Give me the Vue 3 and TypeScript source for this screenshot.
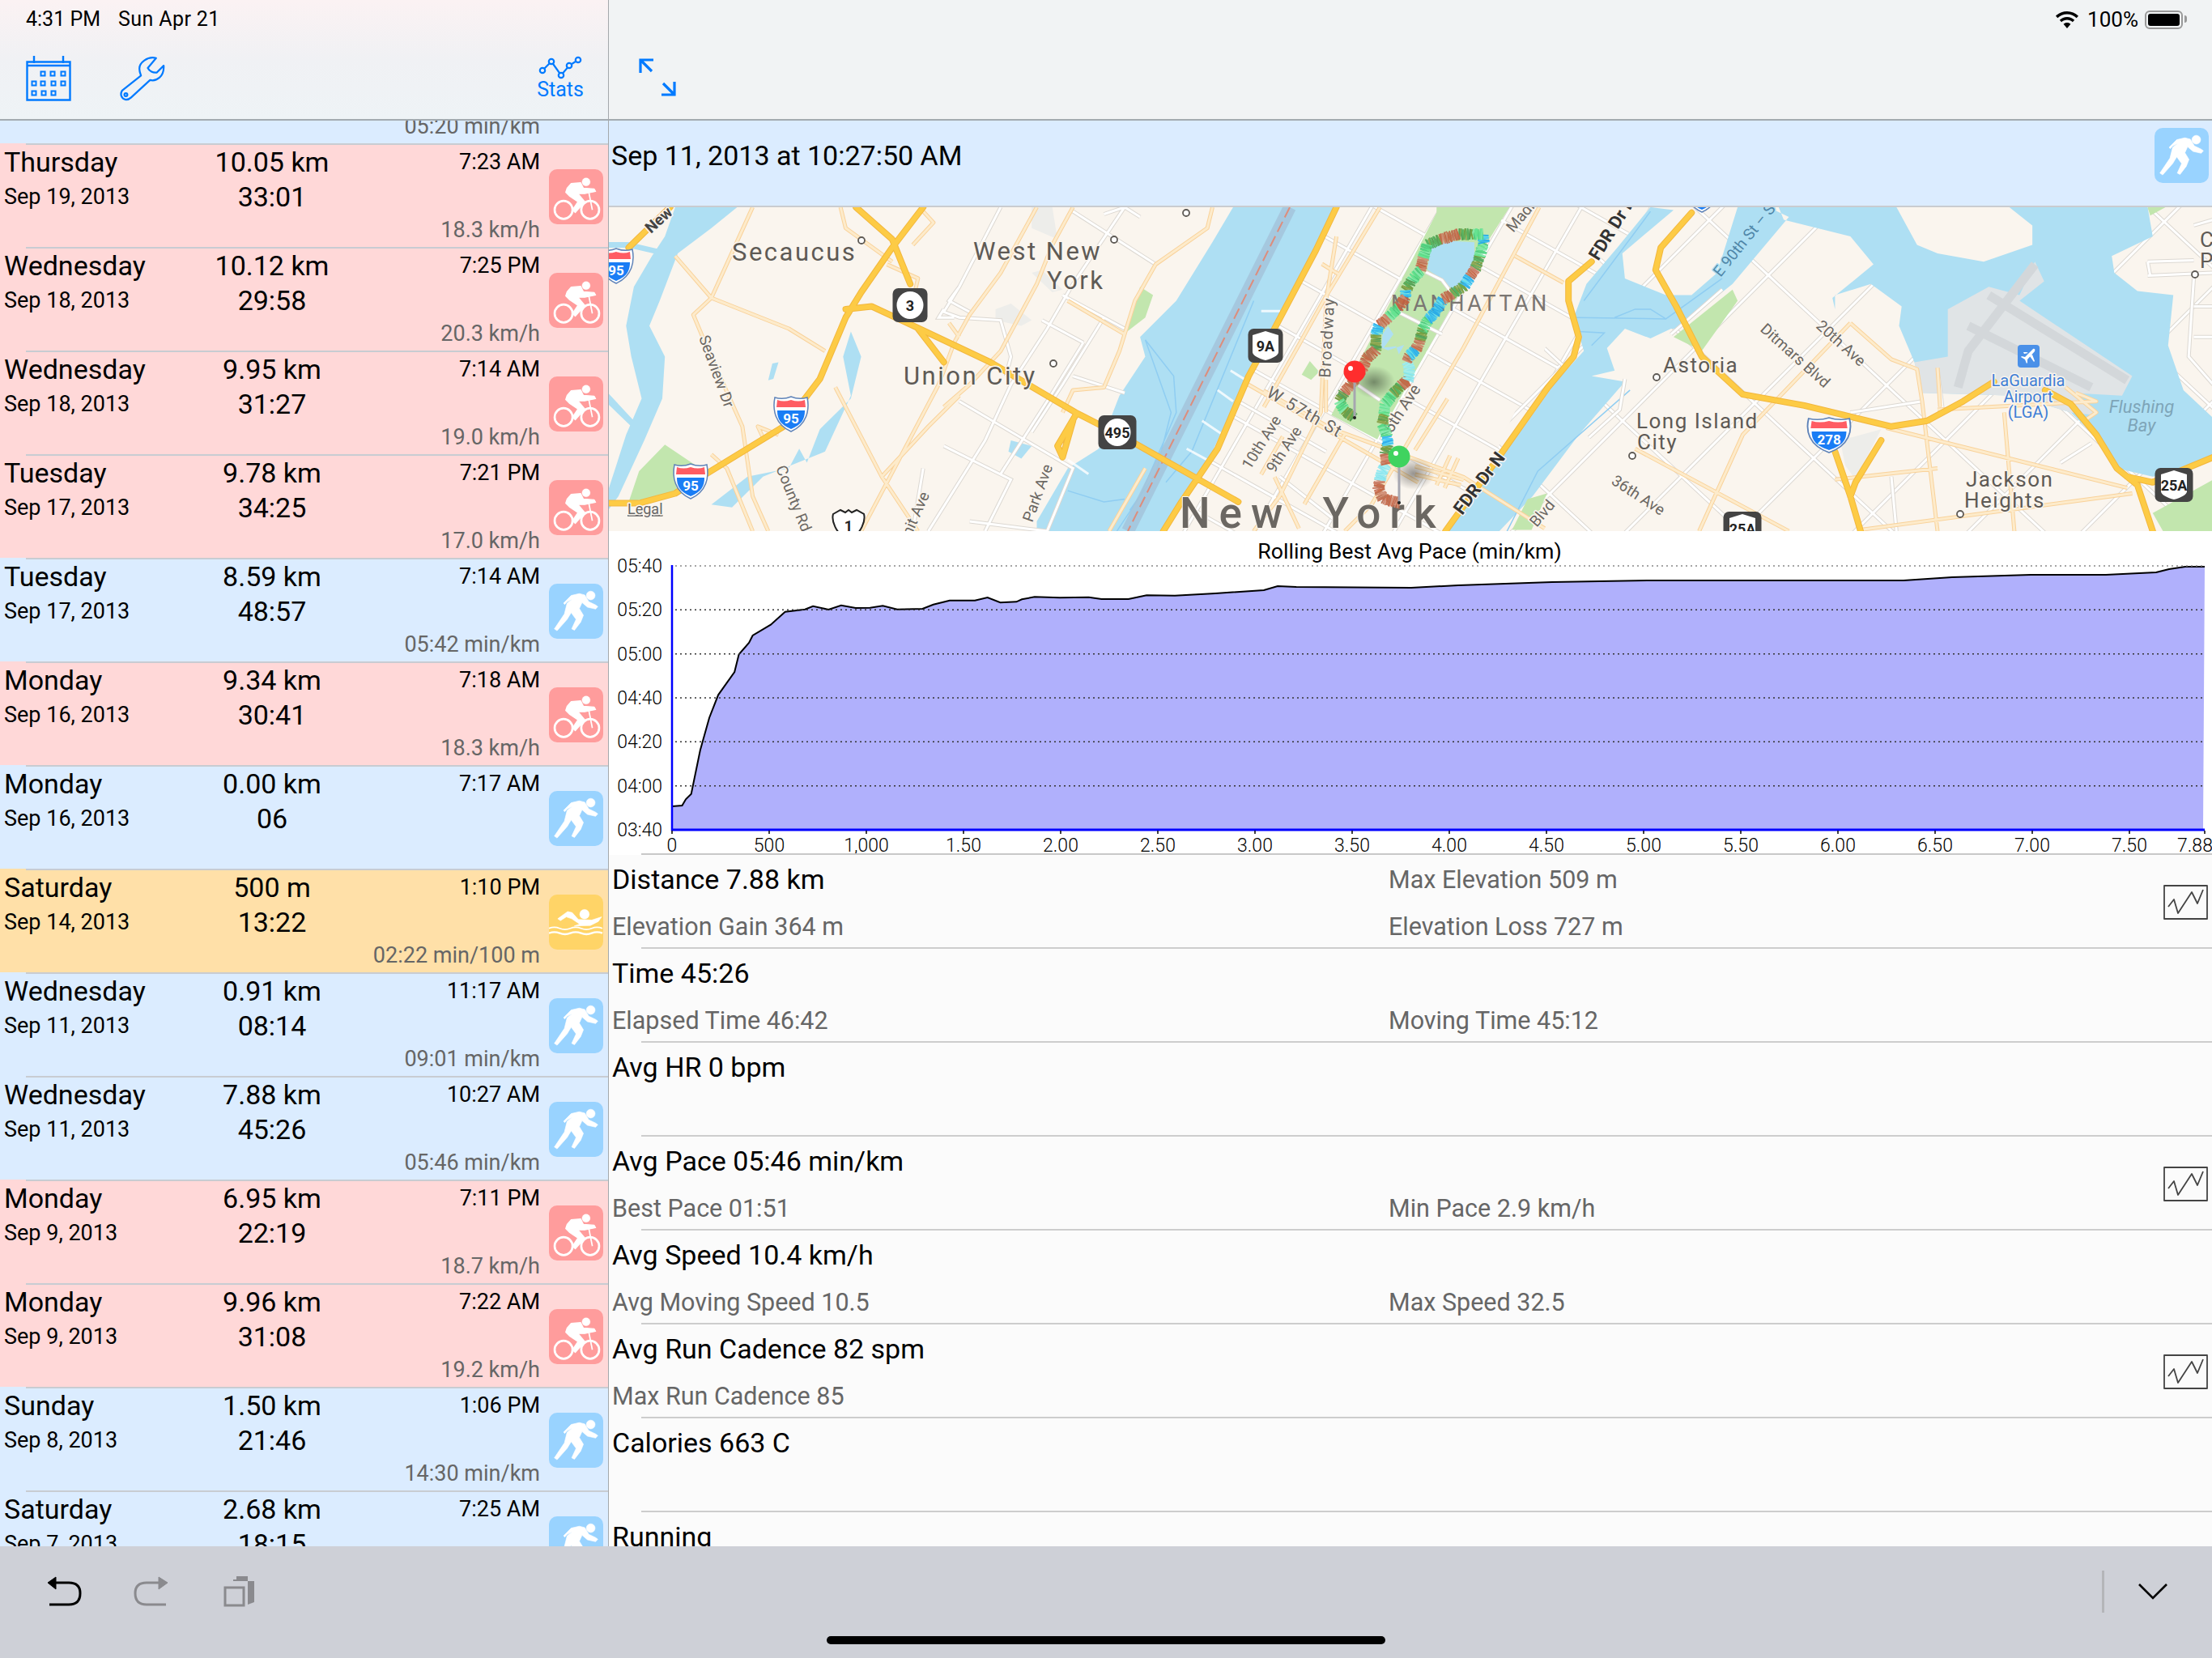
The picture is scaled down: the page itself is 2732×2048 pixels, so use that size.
<script setup lang="ts">
type Kind = 'bike' | 'run' | 'swim'

interface Workout {
  day: string
  date: string
  dist: string
  time: string
  start: string
  pace: string
  kind: Kind
}

const workouts: Workout[] = [
  { day: '', date: '', dist: '', time: '', start: '', pace: '05:20 min/km', kind: 'run' },
  { day: 'Thursday', date: 'Sep 19, 2013', dist: '10.05 km', time: '33:01', start: '7:23 AM', pace: '18.3 km/h', kind: 'bike' },
  { day: 'Wednesday', date: 'Sep 18, 2013', dist: '10.12 km', time: '29:58', start: '7:25 PM', pace: '20.3 km/h', kind: 'bike' },
  { day: 'Wednesday', date: 'Sep 18, 2013', dist: '9.95 km', time: '31:27', start: '7:14 AM', pace: '19.0 km/h', kind: 'bike' },
  { day: 'Tuesday', date: 'Sep 17, 2013', dist: '9.78 km', time: '34:25', start: '7:21 PM', pace: '17.0 km/h', kind: 'bike' },
  { day: 'Tuesday', date: 'Sep 17, 2013', dist: '8.59 km', time: '48:57', start: '7:14 AM', pace: '05:42 min/km', kind: 'run' },
  { day: 'Monday', date: 'Sep 16, 2013', dist: '9.34 km', time: '30:41', start: '7:18 AM', pace: '18.3 km/h', kind: 'bike' },
  { day: 'Monday', date: 'Sep 16, 2013', dist: '0.00 km', time: '06', start: '7:17 AM', pace: '', kind: 'run' },
  { day: 'Saturday', date: 'Sep 14, 2013', dist: '500 m', time: '13:22', start: '1:10 PM', pace: '02:22 min/100 m', kind: 'swim' },
  { day: 'Wednesday', date: 'Sep 11, 2013', dist: '0.91 km', time: '08:14', start: '11:17 AM', pace: '09:01 min/km', kind: 'run' },
  { day: 'Wednesday', date: 'Sep 11, 2013', dist: '7.88 km', time: '45:26', start: '10:27 AM', pace: '05:46 min/km', kind: 'run' },
  { day: 'Monday', date: 'Sep 9, 2013', dist: '6.95 km', time: '22:19', start: '7:11 PM', pace: '18.7 km/h', kind: 'bike' },
  { day: 'Monday', date: 'Sep 9, 2013', dist: '9.96 km', time: '31:08', start: '7:22 AM', pace: '19.2 km/h', kind: 'bike' },
  { day: 'Sunday', date: 'Sep 8, 2013', dist: '1.50 km', time: '21:46', start: '1:06 PM', pace: '14:30 min/km', kind: 'run' },
  { day: 'Saturday', date: 'Sep 7, 2013', dist: '2.68 km', time: '18:15', start: '7:25 AM', pace: '', kind: 'run' }
]

const details = [
  { main: 'Distance 7.88 km', top: 'Max Elevation 509 m', left: 'Elevation Gain 364 m', right: 'Elevation Loss 727 m', chart: true },
  { main: 'Time 45:26', top: '', left: 'Elapsed Time 46:42', right: 'Moving Time 45:12', chart: false },
  { main: 'Avg HR 0 bpm', top: '', left: '', right: '', chart: false },
  { main: 'Avg Pace 05:46 min/km', top: '', left: 'Best Pace 01:51', right: 'Min Pace 2.9 km/h', chart: true },
  { main: 'Avg Speed 10.4 km/h', top: '', left: 'Avg Moving Speed 10.5', right: 'Max Speed 32.5', chart: false },
  { main: 'Avg Run Cadence 82 spm', top: '', left: 'Max Run Cadence 85', right: '', chart: true },
  { main: 'Calories 663 C', top: '', left: '', right: '', chart: false },
  { main: 'Running', top: '', left: '', right: '', chart: false }
]

// map is traced from crops, each crop has its own scale
function conv(s: string, ox: number, oy: number, sx: number, sy: number, close = false) {
  const pts = s.trim().split(/\s+/).map(p => {
    const [x, y] = p.split(',').map(Number)
    return `${(ox + x * sx).toFixed(1)} ${(oy + y * sy).toFixed(1)}`
  })
  return 'M' + pts.join('L') + (close ? 'Z' : '')
}
const L = (s: string, c = false) => conv(s, 750, 130, 0.638, 0.345, c)
const R = (s: string, c = false) => conv(s, 1740, 130, 0.633, 0.345, c)
const M = (s: string, c = false) => conv(s, 1560, 256, 1 / 3, 1 / 3, c)

function grid(ax: number, ay: number, dx: number, dy: number, sx: number, sy: number, from: number, to: number) {
  const out: string[] = []
  for (let i = from; i <= to; i++) {
    const x = ax + i * sx
    const y = ay + i * sy
    out.push(`M${x - dx * 900} ${y - dy * 900}L${x + dx * 900} ${y + dy * 900}`)
  }
  return out.join('')
}

const manhattanGrid =
  grid(1700, 543, 0.5, -0.866, 65, 37, -6, 7) + grid(1700, 543, 0.87, 0.49, 31, -54, -3, 7)
const queensGrid =
  grid(2183, 340, 0.7, -0.7, 73, 68, -4, 7) + grid(2183, 340, 0.73, 0.68, 90, -90, -3, 5)

const water = [
  R('470,365 405,510 345,640 320,760 340,880 285,990 235,1120 170,1280 75,1525 175,1525 240,1400 330,1180 420,990 355,970 400,950 385,870 420,800 470,835 510,800 520,800 630,640 740,400 700,365 640,365 600,600 550,680 500,680 420,620 415,530 515,375', true),
  R('720,365 1440,365 1450,470 1370,540 1375,600 1420,665 1490,680 1480,860 1510,1020 1568,1120 1568,1260 1520,1310 1450,1330 1380,1300 1340,1190 1290,1100 1180,1040 1000,1030 985,920 955,790 960,720 900,640 830,680 830,730 825,690 905,570 860,470 730,410', true),
  L('1210,365 1170,490 1100,700 1030,830 1040,900 990,1040 950,1230 890,1300 830,1490 830,1525 1080,1525 1110,1400 1170,1240 1240,960 1300,780 1370,500 1410,365', true),
  L('130,365 250,365 200,440 135,530 100,700 80,790 110,900 105,1050 70,1200 20,1400 0,1450 0,1380 35,1180 65,1050 45,900 35,790 50,650 85,540 110,470', true),
  L('0,490 40,490 110,520 110,540 40,510 0,510', true),
  L('0,1030 50,1130 45,1150 0,1070', true),
  L('470,810 490,900 470,1050 410,1160 385,1280 370,1230 350,1300 270,1330 200,1430 240,1440 300,1330 420,1240 470,1040 455,900', true),
  L('330,920 320,980 310,985 318,925', true),
  L('780,1200 820,1220 800,1265 775,1240', true)
]
const lakes = [
  M('620,140 700,125 780,130 780,190 745,270 700,305 650,260 605,230', true),
  M('460,440 480,470 445,520 490,515 500,545 520,510 460,530 435,520 440,470', true)
]
const land = [
  R('950,365 1170,365 1215,430 1215,500 1120,560 1030,530 990,500', true)
]
const parks = [
  M('640,0 910,0 840,110 420,860 250,770 640,20', true),
  R('630,660 640,700 570,880 515,830', true),
  L('1030,650 1055,680 1040,760 1005,810', true),
  L('110,1215 170,1290 130,1390 40,1420 60,1310', true),
  M('140,620 170,570 205,610 175,640', true),
  R('1440,365 1475,365 1445,395', true),
  R('1568,1340 1450,1460 1470,1525 1568,1525', true),
  R('230,1410 268,1390 238,1520 200,1520', true)
]
const airport = [
  R('1050,730 1130,650 1190,680 1220,560 1238,630 1190,700 1410,970 1390,1040 1290,1030 1340,1110 1290,1100 1180,1040 1000,1030 985,920 1050,900', true)
]
const runways = [
  R('1130,680 1400,985'),
  R('1220,570 1090,880 1070,1010'),
  R('1090,790 1330,1010')
]
const gray = [
  L('820,365 860,365 870,480 820,440', true),
  L('750,730 780,710 820,770 800,790 750,770', true),
  L('820,600 840,590 880,660 860,670', true),
  R('840,1200 920,1160 870,1340 850,1290', true)
]
const ferries = [
  R('325,760 500,765 610,620'),
  R('330,810 380,815 355,860'),
  R('400,760 440,730 470,730 500,765'),
  L('1040,840 1095,970 1100,1100 1030,1400 985,1525'),
  L('1040,840 1090,1100 1060,1320 1010,1450'),
  L('1250,700 1130,1240 1080,1350'),
  R('470,380 340,700'),
  R('430,1020 250,1310 190,1525'),
  L('890,1380 960,1420 1000,1410')
]
const piers = [
  L('1180,1020 1210,1060'), L('1150,1130 1190,1180'), L('1120,1230 1160,1270'), L('1205,950 1240,990'),
  L('890,1270 930,1320'), M('-10,385 60,385')
]
const whiteRoads = [
  L('760,365 680,650 650,740 680,760 760,770 780,900 770,970'),
  L('1000,365 900,640 850,800 780,1000 730,1200 620,1525'),
  L('900,380 1060,570'), L('880,680 1000,800'), L('840,770 920,850'), L('900,970 1000,1030'),
  L('680,1060 900,1300 850,1525'), L('650,1220 780,1340 730,1525'), L('960,390 1000,365 1030,400'),
  L('920,850 850,1060 760,1320'), L('960,760 880,1000 820,1170'), L('680,650 660,700 700,740'),
  L('610,1300 590,1525'), L('700,1490 850,1525'), L('650,730 640,760 670,760'),
  L('1220,1060 1390,1240'), L('1300,1330 1410,1490'),
  R('1530,620 1520,900 1568,1000'), R('1440,560 1530,555'), R('1440,610 1568,600'), R('1440,560 1445,610'),
  R('1530,430 1568,410'), R('1530,720 1568,720'), R('1530,830 1568,830'),
  R('860,1100 1000,1060'), R('940,1330 950,1525'), R('1030,940 1040,1090'),
  R('350,1190 410,1090 420,980'), R('510,820 610,660'), R('1270,1280 1330,1210'),
  M('600,240 660,270 690,310'), M('500,390 660,470'), M('350,660 430,715')
]
const paleRoads = [
  L('280,365 200,690 350,800 420,880'), L('200,690 165,750 190,860 260,1150 280,1400 310,1525'),
  L('450,365 460,440 550,560'), L('610,380 630,420 590,500'),
  L('830,365 760,600 700,750 670,850 640,1000 560,1280 490,1525'), L('900,365 860,500 830,640 760,880 700,1000 650,1080'),
  L('1170,365 1160,440 1060,570 1020,700 990,880 960,1010 900,1020 880,1100'),
  L('440,1010 530,1330 600,1525'), L('680,1040 620,1150 530,1330'), L('200,1250 230,1300 280,1525'),
  L('890,700 1000,820'), L('540,570 600,620 590,700'), L('130,540 200,690'), L('330,1180 290,1150 300,1190'),
  L('970,1525 1040,1300'), L('660,780 680,830'),
  L('1410,470 1390,700 1380,1100 1300,1400 1250,1525'), L('1230,990 1568,1350'),
  M('430,0 230,330 130,510 0,740'), M('1020,0 740,520 400,1100 300,1200'),
  M('215,210 280,250'), M('0,680 250,820 740,1000 1040,1190'), M('300,840 150,1100'), M('560,900 680,710'),
  M('230,640 230,760'), M('40,1000 130,1190'), M('70,850 -10,990'),
  M('930,180 1110,280'), M('560,960 740,1010'), M('560,990 730,1030'), M('690,920 640,1030'), M('720,930 670,1040'),
  R('860,780 940,910 990,945 1000,1060 1030,1525'), R('860,780 650,1180 565,1525'),
  R('930,1155 1400,1370'), R('880,1520 1410,1390'), R('830,1340 1030,1300'), R('1160,1100 1180,1525'),
  R('440,1230 740,1525'), R('1030,1090 1340,1060 1300,1030'), R('1280,1010 1340,1100 1320,1125'), R('1030,940 1035,1080')
]
const highways = [
  L('480,365 550,480 585,640'),
  L('610,365 550,510 490,670 460,760 410,980 340,1150 190,1320 130,1390 60,1425 0,1425'),
  L('120,365 40,510'),
  L('460,730 510,720 580,780 740,920 905,1100 1000,1190 1220,1420'),
  L('600,800 650,920'), L('905,1110 870,1220 880,1260 900,1130'),
  L('1410,365 1370,520 1290,800 1240,970 1180,1230 1110,1420 1075,1525'),
  R('550,385 490,510 480,590 520,720 570,900 650,1035 770,1075 940,1150 1010,1130 1080,1060 1140,990'),
  R('1240,1020 1290,1070 1340,1180 1380,1300 1420,1360 1450,1525'),
  R('1400,1330 1450,1350 1568,1260'),
  R('830,1240 860,1400 880,1525'), R('920,1200 870,1350 860,1400'),
  R('355,560 310,630 310,700 330,830 320,900 270,1010 170,1270 70,1525')
]

const labels = [
  { t: 'Secaucus', x: 903, y: 322, s: 31, r: 0, c: 'city big' },
  { t: 'West New', x: 1201, y: 321, s: 31, r: 0, c: 'city big' },
  { t: 'York', x: 1292, y: 357, s: 31, r: 0, c: 'city big' },
  { t: 'Union City', x: 1115, y: 475, s: 31, r: 0, c: 'city big' },
  { t: 'Seaview Dr', x: 862, y: 417, s: 19, r: 70, c: 'road' },
  { t: 'County Rd', x: 957, y: 578, s: 19, r: 68, c: 'road' },
  { t: 'Park Ave', x: 1274, y: 646, s: 19, r: -70, c: 'road' },
  { t: 'Summit Ave', x: 1106, y: 704, s: 19, r: -66, c: 'road' },
  { t: 'New', x: 803, y: 289, s: 19, r: -42, c: 'road strong' },
  { t: 'Broadway', x: 1642, y: 467, s: 20, r: -87, c: 'road wide' },
  { t: 'W 57th St', x: 1562, y: 489, s: 21, r: 30, c: 'road wide' },
  { t: '10th Ave', x: 1543, y: 581, s: 19, r: -58, c: 'road' },
  { t: '9th Ave', x: 1573, y: 585, s: 19, r: -57, c: 'road' },
  { t: '5th Ave', x: 1718, y: 536, s: 20, r: -57, c: 'road' },
  { t: 'Madison', x: 1868, y: 288, s: 19, r: -50, c: 'road' },
  { t: 'MANHATTAN', x: 1717, y: 384, s: 27, r: 0, c: 'hood' },
  { t: 'FDR Dr N', x: 1805, y: 637, s: 22, r: -53, c: 'fdr' },
  { t: 'FDR Dr N', x: 1973, y: 323, s: 22, r: -58, c: 'fdr' },
  { t: 'E 90th St – S', x: 2124, y: 343, s: 19, r: -51, c: 'road ferry' },
  { t: 'Astoria', x: 2053, y: 460, s: 26, r: 0, c: 'city' },
  { t: 'Long Island', x: 2020, y: 529, s: 26, r: 0, c: 'city' },
  { t: 'City', x: 2021, y: 555, s: 26, r: 0, c: 'city' },
  { t: 'Ditmars Blvd', x: 2172, y: 408, s: 19, r: 42, c: 'road' },
  { t: '20th Ave', x: 2241, y: 404, s: 19, r: 42, c: 'road' },
  { t: '36th Ave', x: 1988, y: 597, s: 19, r: 33, c: 'road' },
  { t: 'Jackson', x: 2427, y: 601, s: 26, r: 0, c: 'city' },
  { t: 'Heights', x: 2425, y: 627, s: 26, r: 0, c: 'city' },
  { t: 'Blvd', x: 1897, y: 652, s: 19, r: -50, c: 'road' },
  { t: 'C', x: 2716, y: 305, s: 26, r: 0, c: 'city' },
  { t: 'P', x: 2716, y: 331, s: 26, r: 0, c: 'city' }
]
const dots = [
  [1063, 297], [1375, 296], [1300, 449], [1464, 263], [2045, 466], [2015, 563], [2420, 635], [2710, 339]
]

const interstates = [
  { n: '95', x: 976, y: 511, k: 1 }, { n: '95', x: 852, y: 594, k: 1 }, { n: '95', x: 760, y: 328, k: 1 },
  { n: '278', x: 2258, y: 537, k: 1.26 }, { n: '', x: 2101, y: 240, k: 1 }
]
const badges = [
  { n: '3', x: 1123, y: 377, w: 43, round: true }, { n: '495', x: 1379, y: 534, w: 47, round: true },
  { n: '9A', x: 1562, y: 427, w: 43, round: false }, { n: '25A', x: 2684, y: 599, w: 47, round: false },
  { n: '25A', x: 2151, y: 653, w: 47, round: false }
]

// route colours along the run, arriving at each point
const palette: Record<string, string[]> = {
  b: ['#c9775f', '#b9684a', '#d08a70', '#c4603f'],
  g: ['#5fe38f', '#47c97a', '#7fe8a8', '#52d882'],
  o: ['#6f9a3a', '#4fae5a', '#8aa24a', '#4f9a50'],
  c: ['#2fb8f0', '#3ec9f5', '#1fa8ec', '#5fdcf0'],
  l: ['#8fe9f2', '#a2eef0', '#7de3ee']
}
const routeRaw = 'b500,1095 b440,1080 b425,1040 b430,1010 l440,975 l455,950 b450,910 o460,880 c455,845 g440,800 o445,765 g450,730 g480,690 o510,660 b535,640 l540,600 l530,570 b540,550 c565,525 b580,490 o590,450 g610,415 c635,390 c665,340 b700,320 o745,290 c765,255 b785,225 o800,180 g815,130 c810,100 g770,100 o720,100 b650,120 o605,140 g590,190 b580,235 g545,275 o525,310 c525,335 b495,375 g460,410 b425,440 c415,475 o415,530 b380,560 b370,590 b335,640 b295,690 o280,720 g300,755 o335,780'

let seed = 7
const rnd = () => {
  seed = (seed * 16807) % 2147483647
  return seed / 2147483647
}
const ticks: { d: string; c: string }[] = []
const way = routeRaw.split(' ').map(w => {
  const [x, y] = w.slice(1).split(',').map(Number)
  return { k: w[0], x: 1560 + x / 3, y: 256 + y / 3 }
})
for (let i = 1; i < way.length; i++) {
  const a = way[i - 1]
  const b = way[i]
  const len = Math.hypot(b.x - a.x, b.y - a.y)
  const n = Math.max(2, Math.round(len / 1.2))
  for (let j = 0; j < n; j++) {
    const t = j / n
    const x = a.x + (b.x - a.x) * t
    const y = a.y + (b.y - a.y) * t
    const ang = Math.atan2(b.y - a.y, b.x - a.x) + Math.PI / 2 + (rnd() - 0.5) * 0.5
    const h = 6 + rnd() * 1.5
    const set = palette[b.k]
    ticks.push({
      d: `M${(x - Math.cos(ang) * h).toFixed(1)} ${(y - Math.sin(ang) * h).toFixed(1)}L${(x + Math.cos(ang) * h).toFixed(1)} ${(y + Math.sin(ang) * h).toFixed(1)}`,
      c: set[Math.floor(rnd() * set.length)]
    })
  }
}

// chart
const curve = '177,1038 205,1035 215,1012 230,992 255,830 280,710 305,625 350,540 362,475 390,432 400,405 450,365 490,317 545,308 567,296 610,309 645,293 685,303 725,302 760,295 800,308 870,306 900,290 945,275 1015,275 1050,264 1085,283 1130,280 1145,271 1180,262 1250,265 1330,263 1365,270 1440,270 1490,256 1568,257'
  .split(' ')
  .map(p => {
    const [x, y] = p.split(',').map(Number)
    return [829 + (x - 177) / 2.24, 650 + y / 3]
  })
  .concat([
    [1500, 733], [1560, 729], [1577, 724], [1600, 725], [1742, 726], [1800, 723], [1916, 719], [2038, 717],
    [2300, 717], [2350, 717], [2410, 713], [2507, 710], [2600, 710], [2662, 707], [2678, 703], [2698, 700], [2722, 700]
  ])
const curveLine = 'M' + curve.map(p => `${p[0].toFixed(1)} ${p[1].toFixed(1)}`).join('L')
const curveFill = curveLine + 'L2720 1025L829 1025Z'

const yTicks = ['05:40', '05:20', '05:00', '04:40', '04:20', '04:00', '03:40'].map((t, i) => ({
  t,
  y: 699 + i * 54.33
}))
const xTicks = ['0', '500', '1,000', '1.50', '2.00', '2.50', '3.00', '3.50', '4.00', '4.50', '5.00', '5.50', '6.00', '6.50', '7.00', '7.50'].map((t, i) => ({
  t,
  x: 829 + i * 120
}))
</script>

<template>
  <div class="app">
    <div class="main">
      <!-- left list -->
      <aside class="left">
        <header class="left-head">
          <div class="status">4:31 PM<span class="status-date">Sun Apr 21</span></div>
          <div class="tools">
            <svg class="tool" viewBox="32 69 56 56" fill="none" stroke="#007aff" stroke-width="2.4">
              <path d="M33.5 76.5H86.5V123.5H33.5ZM33.5 81H86.5M42 69V78M78 69V78" />
              <path d="M50.5 88.5h5v5h-5zM62.5 88.5h5v5h-5zM75.5 88.5h5v5h-5zM39.5 100.500h5v5h-5zM50.5 100.500h5v5h-5zM63.500 100.500h5v5h-5zM75.500 100.500h5v5h-5zM39.500 112.500h5v5h-5zM51.500 112.500h5v5h-5zM63.500 112.500h5v5h-5z" stroke-width="2" />
            </svg>
            <svg class="tool" viewBox="146 68 60 58" fill="none" stroke="#007aff" stroke-width="2.4" stroke-linejoin="round">
              <path d="M194 70C183 67 171 76 172 85C172 88 173 90 174 93L149 113C146 118 148 124 154 125C157 125 159 124 161 122L186 99C194 101 205 95 204 80L195 89C190 90 185 87 183 83Z" />
              <circle cx="154" cy="118.500" r="2" />
            </svg>
            <div class="stats">
              <svg viewBox="662 70 56 30" width="56" height="30" fill="none" stroke="#007aff" stroke-width="2.2">
                <path d="M668 88L679 77L691 94L701 82L712 75" />
                <circle cx="668" cy="88" r="3.200" fill="#f1f3f6" />
                <circle cx="679" cy="77" r="3.200" fill="#f1f3f6" />
                <circle cx="691" cy="94" r="3.200" fill="#f1f3f6" />
                <circle cx="701" cy="82" r="3.200" fill="#f1f3f6" />
                <circle cx="712" cy="75" r="3.200" fill="#f1f3f6" />
              </svg>
              <span>Stats</span>
            </div>
          </div>
        </header>
        <div class="list">
          <div
            v-for="(w, i) in workouts"
            :key="i"
            class="row"
            :class="w.kind"
          >
            <div class="day">{{ w.day }}</div>
            <div class="dist">{{ w.dist }}</div>
            <div class="start">{{ w.start }}</div>
            <div class="date">{{ w.date }}</div>
            <div class="time">{{ w.time }}</div>
            <div class="pace">{{ w.pace }}</div>
            <div class="badge">
              <svg v-if="w.kind === 'run'" viewBox="18 20 200 200" fill="#fff" stroke="#fff" stroke-width="2" stroke-linejoin="round">
                <circle cx="172" cy="62" r="16" />
                <path d="M72 90L100 62L130 55L150 60L165 85L190 97L198 103L190 112L160 105L140 88L130 110L145 135L135 160L112 190L102 185L118 150L100 125L85 150L48 192L38 185L75 130L85 90L105 75L85 85L76 95Z" />
              </svg>
              <svg v-else-if="w.kind === 'bike'" viewBox="18 15 200 203" fill="#fff" stroke="#fff" stroke-linejoin="round">
                <circle cx="155" cy="62" r="15" />
                <path stroke-width="4" d="M85 85L100 68L135 65L145 85L185 88L190 97L150 105L125 105L150 135L115 175L105 165L125 135L95 115L80 100Z" />
                <path fill="none" stroke-width="5" d="M165 100L178 165" />
                <circle cx="72" cy="165" r="33" fill="none" stroke-width="8" />
                <circle cx="170" cy="165" r="33" fill="none" stroke-width="8" />
              </svg>
              <svg v-else viewBox="235 316 203 203" fill="#fff" stroke="#fff" stroke-linejoin="round">
                <circle cx="368" cy="388" r="18" />
                <path stroke-width="2" d="M268 405L305 378L322 382L345 408L395 410L432 398L420 415L390 430L330 432L350 425L320 405L300 398L278 412Z" />
                <path fill="none" stroke-width="5" d="M235 441q20 -8 40 0t40 0t40 0t40 0t40 0" />
                <path fill="none" stroke-width="7" d="M235 459q20 -8 40 0t40 0t40 0t40 0t40 0" />
              </svg>
            </div>
          </div>
        </div>
      </aside>

      <!-- right detail -->
      <section class="right">
        <header class="right-head">
          <div class="status-right">
            <svg viewBox="0 0 28 21" width="28" height="21" fill="#000">
              <path d="M14 0C8.600 0 3.800 2.100 0 5.700L2.400 8.300C5.500 5.300 9.500 3.600 14 3.600S22.500 5.300 25.600 8.300L28 5.700C24.200 2.100 19.400 0 14 0Z" />
              <path d="M14 7C10.500 7 7.300 8.400 4.800 10.700L7.200 13.300C9 11.600 11.400 10.600 14 10.600S19 11.600 20.800 13.300L23.200 10.700C20.700 8.400 17.500 7 14 7Z" />
              <path d="M14 14C12.300 14 10.800 14.600 9.600 15.700L14 21L18.400 15.700C17.200 14.600 15.700 14 14 14Z" />
            </svg>
            <span>100%</span>
            <div class="battery"><i></i></div>
          </div>
          <svg class="expand" viewBox="787 71 48 49" fill="none" stroke="#007aff" stroke-width="3.200">
            <path d="M806 74H790V90M790 74L804 88" />
            <path d="M816 117H832V101M832 117L818 103" />
          </svg>
        </header>

        <div class="title-row">
          <span>Sep 11, 2013 at 10:27:50 AM</span>
          <div class="badge run">
            <svg viewBox="18 20 200 200" fill="#fff" stroke="#fff" stroke-width="2" stroke-linejoin="round">
              <circle cx="172" cy="62" r="16" />
              <path d="M72 90L100 62L130 55L150 60L165 85L190 97L198 103L190 112L160 105L140 88L130 110L145 135L135 160L112 190L102 185L118 150L100 125L85 150L48 192L38 185L75 130L85 90L105 75L85 85L76 95Z" />
            </svg>
          </div>
        </div>

        <svg class="map" viewBox="751 256 1981 400" width="1981" height="400">
          <defs>
            <clipPath id="manhattan">
              <path d="M1650 256L1624 302L1579 399L1541 461L1496 558L1458 613L1439 656L1787 656L1848 572L1889 516L1920 472L1955 434L1943 392L1958 351L1996 306L2037 256Z" />
            </clipPath>
            <clipPath id="queens">
              <path d="M1990 256L2732 256L2732 656L1800 656Z" />
            </clipPath>
            <radialGradient id="pin-shadow">
              <stop offset="0" stop-color="#000" stop-opacity=".4" />
              <stop offset="1" stop-color="#000" stop-opacity="0" />
            </radialGradient>
          </defs>

          <rect x="751" y="256" width="1981" height="400" fill="#faf5ee" />
          <path :d="gray.join('')" fill="#ededea" />
          <path :d="manhattanGrid" clip-path="url(#manhattan)" class="case" />
          <path :d="manhattanGrid" clip-path="url(#manhattan)" class="white" />
          <path :d="queensGrid" clip-path="url(#queens)" class="case" />
          <path :d="queensGrid" clip-path="url(#queens)" class="white" />

          <path :d="water.join('')" fill="#aedff3" />
          <path :d="land.join('')" fill="#faf5ee" />
          <path :d="parks.join('')" fill="#c2e6ae" />
          <path :d="airport.join('')" fill="#e0e4e6" />
          <path :d="runways.join('')" fill="none" stroke="#d3d7da" stroke-width="11" />
          <path :d="lakes.join('')" fill="#aedff3" />
          <path :d="ferries.join('')" fill="none" stroke="#8fcdf2" stroke-width="1.500" />
          <path :d="piers.join('')" fill="none" stroke="#fff" stroke-width="3" opacity=".8" />

          <!-- shipping lane down the Hudson -->
          <path d="M1592 256L1392 656" fill="none" stroke="#a3c4da" stroke-width="16" opacity=".85" />
          <path d="M1592 256L1392 656" fill="none" stroke="#dd8d7c" stroke-width="2" stroke-dasharray="14 6" />

          <path :d="whiteRoads.join('')" class="case" />
          <path :d="whiteRoads.join('')" class="white" />
          <path :d="paleRoads.join('')" class="pale-case" />
          <path :d="paleRoads.join('')" class="pale" />
          <path :d="highways.join('')" class="high-case" />
          <path :d="highways.join('')" class="high" />

          <ellipse cx="1696" cy="472" rx="26" ry="20" fill="url(#pin-shadow)" />
          <ellipse cx="1745" cy="585" rx="26" ry="20" fill="url(#pin-shadow)" />

          <g v-for="(d, i) in dots" :key="'d' + i">
            <circle :cx="d[0]" :cy="d[1]" r="4" fill="#fff" stroke="#5e5a55" stroke-width="1.800" />
          </g>

          <text
            v-for="(l, i) in labels"
            :key="'l' + i"
            :x="l.x"
            :y="l.y"
            :font-size="l.s"
            :class="['label', l.c]"
            :transform="l.r ? `rotate(${l.r} ${l.x} ${l.y})` : undefined"
          >{{ l.t }}</text>
          <text x="1456" y="652" font-size="53" class="label newyork">New York</text>
          <text x="774" y="635" font-size="18" class="label legal">Legal</text>
          <text x="2504" y="477" font-size="20" class="label lga">LaGuardia</text>
          <text x="2504" y="497" font-size="20" class="label lga">Airport</text>
          <text x="2504" y="516" font-size="20" class="label lga">(LGA)</text>
          <text x="2644" y="510" font-size="22" class="label bay">Flushing</text>
          <text x="2644" y="533" font-size="22" class="label bay">Bay</text>

          <rect x="2491" y="426" width="27" height="28" rx="4" fill="#4a90e8" />
          <path d="M2510 431L2500 441L2496 440L2495 441L2500 444L2502 449L2503 448L2503 444L2512 434C2513 432 2512 430 2510 431ZM2506 440L2511 447L2512 446L2509 438ZM2499 437L2504 436L2502 435L2498 435Z" fill="#fff" />

          <!-- road shields -->
          <g v-for="(s, i) in interstates" :key="'s' + i" :transform="`translate(${s.x} ${s.y}) scale(${s.k} 1)`">
            <path d="M-20 -20Q-10 -17 0 -21Q10 -17 20 -20C23 -5 20 13 0 22C-20 13 -23 -5 -20 -20Z" fill="#fff" stroke="#5f83b8" stroke-width="1.500" />
            <path d="M-17 -4H17C17 6 14 13 0 19C-14 13 -17 6 -17 -4Z" fill="#1a7df5" />
            <path d="M-17 -17Q-9 -14 0 -17Q9 -14 17 -17L18 -8H-18Z" fill="#ff5c63" />
            <text y="12" text-anchor="middle" font-size="17" class="shield-text" :transform="`scale(${1 / s.k} 1)`">{{ s.n }}</text>
          </g>
          <g v-for="(b, i) in badges" :key="'b' + i" :transform="`translate(${b.x} ${b.y})`">
            <rect :x="-b.w / 2" y="-21" :width="b.w" height="42" rx="7" fill="#444" />
            <ellipse v-if="b.round" rx="16.500" ry="17" fill="#fff" />
            <path v-else d="M-16 -13L0 -18L16 -13V8C16 12 8 16 0 18C-8 16 -16 12 -16 8Z" fill="#fff" />
            <text y="7" text-anchor="middle" font-size="18" class="badge-text">{{ b.n }}</text>
          </g>
          <g transform="translate(1047 647)">
            <path d="M-19 -12L-10 -17L-4 -14L0 -17L4 -14L10 -17L19 -12C21 -5 17 12 0 20C-17 12 -21 -5 -19 -12Z" fill="#fff" stroke="#222" stroke-width="2" />
            <text y="9" text-anchor="middle" font-size="18" class="badge-text">1</text>
          </g>

          <!-- route -->
          <g fill="none" stroke-width="1.800" opacity=".92">
            <path v-for="(t, i) in ticks" :key="'t' + i" :d="t.d" :stroke="t.c" />
          </g>

          <!-- pins -->
          <path d="M1672 465V516" stroke="#a6a6b0" stroke-width="3" />
          <circle cx="1672" cy="516" r="2" fill="#222" />
          <circle cx="1672" cy="459" r="13.500" fill="#ff2d2d" />
          <circle cx="1667" cy="455" r="3" fill="#fff" />
          <path d="M1727 570V621" stroke="#a6a6b0" stroke-width="3" />
          <circle cx="1727" cy="621" r="2" fill="#222" />
          <circle cx="1727" cy="564" r="13.500" fill="#3fd35f" />
          <circle cx="1723" cy="560" r="3" fill="#fff" />
        </svg>

        <svg class="chart" viewBox="751 656 1981 400" width="1981" height="400">
          <text x="1740" y="690" text-anchor="middle" class="chart-title">Rolling Best Avg Pace (min/km)</text>
          <path :d="curveFill" fill="#b0b0fc" />
          <path :d="curveLine" fill="none" stroke="#000" stroke-width="2" />
          <g v-for="(t, i) in yTicks" :key="t.t">
            <path
              v-if="i < 6"
              :d="`M833 ${t.y}H2720`"
              fill="none"
              :stroke="i === 0 ? '#888' : '#333'"
              stroke-width="1.500"
              stroke-dasharray="2 4"
            />
            <text x="817" :y="t.y + (i === 6 ? 8 : 8)" text-anchor="end" class="axis">{{ t.t }}</text>
          </g>
          <path d="M829 698V1026" stroke="#0000ff" stroke-width="2.500" />
          <path d="M828 1025H2722" stroke="#0000ff" stroke-width="3" />
          <g v-for="t in xTicks" :key="t.t">
            <path :d="`M${t.x} 1026V1030`" stroke="#000" stroke-width="1.500" />
            <text :x="t.x" y="1052" text-anchor="middle" class="axis">{{ t.t }}</text>
          </g>
          <path d="M2722 1026V1030" stroke="#000" stroke-width="1.500" />
          <text x="2710" y="1052" text-anchor="middle" class="axis">7.88</text>
          <path d="M791 1055H2732" stroke="#c8c8c8" stroke-width="2" />
        </svg>

        <div class="details">
          <div v-for="d in details" :key="d.main" class="detail">
            <div class="detail-main">{{ d.main }}</div>
            <div class="detail-sub top">{{ d.top }}</div>
            <div v-if="d.chart" class="mini">
              <svg viewBox="0 0 55 43" fill="none" stroke="#444" stroke-width="1.800" stroke-linejoin="round">
                <path d="M1 1H54V42H1Z" />
                <path d="M6 27L13 18L18 35L35 9L42 23L49 6" />
              </svg>
            </div>
            <div class="detail-sub low-left">{{ d.left }}</div>
            <div class="detail-sub low-right">{{ d.right }}</div>
          </div>
        </div>
      </section>
    </div>

    <footer class="bar">
      <svg class="undo" viewBox="55 1944 50 42" fill="none" stroke="#000" stroke-width="3">
        <path d="M59 1955L69 1948V1963Z" fill="#000" stroke-width="1" />
        <path d="M69 1955H85Q99 1955 99 1968Q99 1982 85 1982H61" />
      </svg>
      <svg class="redo" viewBox="163 1944 50 42" fill="none" stroke="#8a8a8e" stroke-width="3">
        <path d="M207 1955L196 1948V1963Z" fill="#8a8a8e" stroke-width="1" />
        <path d="M197 1955H181Q167 1955 167 1968Q167 1982 181 1982H205" />
      </svg>
      <svg class="copy" viewBox="274 1944 42 42" fill="#8a8a8e">
        <path d="M278 1961H301V1983H278Z" fill="none" stroke="#8a8a8e" stroke-width="3" />
        <path d="M282 1953H306V1947H292V1951H288V1953ZM306 1953H314V1979L306 1982Z" />
      </svg>
      <div class="bar-right">
        <i class="bar-sep"></i>
        <svg class="chevron" viewBox="0 0 36 20" fill="none" stroke="#000" stroke-width="2.600">
          <path d="M1 1L18 18L35 1" />
        </svg>
      </div>
      <i class="home"></i>
    </footer>
  </div>
</template>

<style scoped>
.app {
  width: 2732px;
  height: 2048px;
  display: flex;
  flex-direction: column;
  overflow: hidden;
  font-family: Roboto, "Liberation Sans", sans-serif;
  color: #000;
  background: #fdfdfd;
}

.main {
  flex: 1;
  min-height: 0;
  display: flex;
}

.left {
  width: 751px;
  flex: none;
  display: flex;
  flex-direction: column;
  border-right: 1px solid #a4a8ac;
}

.left-head {
  height: 149px;
  flex: none;
  background: linear-gradient(#fbf2f3, #f0f1f4 50%, #eef3f6);
  border-bottom: 2px solid #a3abb0;
  box-sizing: border-box;
}

.status {
  padding: 9px 0 0 32px;
  font-size: 25px;
  line-height: 30px;
}

.status-date {
  margin-left: 22px;
  letter-spacing: 0.4px;
}

.tools {
  display: flex;
  align-items: flex-start;
  margin-top: 30px;
  padding-left: 32px;
}

.tool {
  width: 56px;
  height: 56px;
  margin-right: 60px;
}

.stats {
  margin-left: 400px;
  width: 56px;
  display: flex;
  flex-direction: column;
  align-items: center;
  color: #007aff;
  font-size: 25px;
  line-height: 24px;
}

.list {
  flex: 1;
  min-height: 0;
  overflow: hidden;
}

.row {
  position: relative;
  height: 128px;
  box-sizing: border-box;
  padding: 0 5px;
  display: grid;
  grid-template-columns: 221px 220px 221px 67px;
  grid-template-rows: 46px 40px 40px;
  column-gap: 0;
  align-items: center;
  white-space: nowrap;
}

.row:first-child {
  margin-top: -100px;
}

.row::before {
  content: '';
  position: absolute;
  left: 32px;
  right: 0;
  top: 0;
  height: 2px;
  background: #c8ccd2;
}

.row.bike {
  background: #ffd8d8;
}

.row.run {
  background: #dbecff;
}

.row.swim {
  background: #ffe0a8;
}

.day {
  font-size: 34px;
}

.dist {
  font-size: 34px;
  text-align: center;
}

.start {
  font-size: 27px;
  text-align: right;
}

.date {
  font-size: 27px;
}

.time {
  font-size: 34px;
  text-align: center;
}

.pace {
  grid-column: 1 / 4;
  grid-row: 3;
  font-size: 27px;
  color: #666;
  text-align: right;
  margin-top: 2px;
}

.badge {
  width: 67px;
  height: 68px;
  border-radius: 10px;
  display: flex;
}

.badge svg {
  width: 100%;
  height: 100%;
}

.row .badge {
  grid-column: 4;
  grid-row: 1 / 4;
  align-self: start;
  margin: 32px 0 0 11px;
}

.row.bike .badge {
  background: #ff9c9c;
}

.row.run .badge,
.badge.run {
  background: #99d3ff;
}

.row.swim .badge {
  background: #ffd467;
}

.right {
  flex: 1;
  min-width: 0;
  display: flex;
  flex-direction: column;
}

.right-head {
  height: 149px;
  flex: none;
  position: relative;
  background: #f1f3f4;
  border-bottom: 2px solid #a3abb0;
  box-sizing: border-box;
}

.status-right {
  position: absolute;
  top: 11px;
  right: 36px;
  display: flex;
  align-items: center;
  font-size: 26px;
  line-height: 26px;
}

.status-right span {
  margin: 0 8px 0 11px;
}

.battery {
  position: relative;
  width: 47px;
  height: 23px;
  box-sizing: border-box;
  border: 2px solid #999;
  border-radius: 6px;
  padding: 2px;
}

.battery i {
  display: block;
  height: 100%;
  background: #000;
  border-radius: 3px;
}

.battery::after {
  content: '';
  position: absolute;
  right: -7px;
  top: 4px;
  width: 3px;
  height: 9px;
  background: #999;
  border-radius: 0 3px 3px 0;
}

.expand {
  position: absolute;
  left: 36px;
  top: 71px;
  width: 48px;
  height: 49px;
}

.title-row {
  height: 107px;
  flex: none;
  box-sizing: border-box;
  padding: 0 4px 20px 3px;
  display: flex;
  align-items: center;
  justify-content: space-between;
  background: #dbecff;
  border-bottom: 2px solid #c9ccd0;
  font-size: 34px;
}

.map,
.chart {
  display: block;
  flex: none;
}

.case {
  fill: none;
  stroke: #dcd8d2;
  stroke-width: 5;
}

.white {
  fill: none;
  stroke: #fff;
  stroke-width: 3;
}

.pale-case {
  fill: none;
  stroke: #f9d29a;
  stroke-width: 5;
  stroke-linejoin: round;
}

.pale {
  fill: none;
  stroke: #fdebcb;
  stroke-width: 3;
  stroke-linejoin: round;
}

.high-case {
  fill: none;
  stroke: #f2b73e;
  stroke-width: 8;
  stroke-linejoin: round;
  stroke-linecap: round;
}

.high {
  fill: none;
  stroke: #fdcb45;
  stroke-width: 6;
  stroke-linejoin: round;
  stroke-linecap: round;
}

.label {
  paint-order: stroke;
  stroke: #faf5ee;
  stroke-width: 3px;
  stroke-linejoin: round;
  fill: #5e5a55;
}

.city {
  letter-spacing: 1.500px;
}

.city.big {
  letter-spacing: 2.500px;
}

.road {
  fill: #6b6762;
}

.road.wide {
  letter-spacing: 1.500px;
}

.road.strong {
  font-weight: 700;
  fill: #444;
}

.road.ferry {
  fill: #4f86a8;
  stroke: #aedff3;
}

.hood {
  fill: #7a7672;
  letter-spacing: 3.500px;
  stroke: none;
}

.fdr {
  font-weight: 700;
  fill: #333;
}

.newyork {
  fill: #6b6762;
  font-weight: 500;
  letter-spacing: 11px;
  word-spacing: 14px;
  stroke-width: 2px;
}

.legal {
  fill: #666;
  text-decoration: underline;
}

.lga {
  fill: #3f7fd6;
  text-anchor: middle;
}

.bay {
  fill: #7ea5b8;
  font-style: italic;
  text-anchor: middle;
  stroke: none;
}

.shield-text {
  fill: #fff;
  font-weight: 700;
}

.badge-text {
  fill: #222;
  font-weight: 700;
}

.chart {
  background: #fff;
}

.chart-title {
  font-size: 26.700px;
}

.axis {
  font-size: 23px;
  font-weight: 300;
}

.details {
  flex: 1;
  min-height: 0;
  overflow: hidden;
  background: #fbfbfb;
}

.detail {
  position: relative;
  height: 116px;
  box-sizing: border-box;
  padding: 0 5px 0 4px;
  display: grid;
  grid-template-columns: 959px 1fr 55px;
  grid-template-rows: 60px 56px;
  align-items: center;
  white-space: nowrap;
}

.detail::after {
  content: '';
  position: absolute;
  left: 40px;
  right: 0;
  bottom: 0;
  height: 2px;
  background: #cdcdcd;
}

.detail-main {
  font-size: 34px;
  grid-column: 1;
  grid-row: 1;
}

.detail-sub {
  font-size: 30.500px;
  color: #666;
}

.top {
  grid-column: 2;
  grid-row: 1;
}

.low-left {
  grid-column: 1;
  grid-row: 2;
}

.low-right {
  grid-column: 2;
  grid-row: 2;
}

.mini {
  grid-column: 3;
  grid-row: 1 / 3;
  align-self: start;
  margin-top: 37px;
  height: 43px;
}

.mini svg {
  display: block;
  width: 55px;
  height: 43px;
}

.bar {
  position: relative;
  height: 138px;
  flex: none;
  display: flex;
  align-items: flex-start;
  padding: 34px 55px 0;
  box-sizing: border-box;
  background: #ced0d7;
}

.undo,
.redo {
  width: 50px;
  height: 42px;
}

.redo {
  margin-left: 58px;
}

.copy {
  width: 42px;
  height: 42px;
  margin-left: 61px;
}

.bar-right {
  margin-left: auto;
  display: flex;
  align-items: flex-start;
}

.bar-sep {
  display: block;
  width: 3px;
  height: 52px;
  margin-top: -4px;
  margin-right: -1px;
  background: #b4b5b9;
}

.chevron {
  width: 36px;
  height: 20px;
  margin: 12px 0 0 43px;
}

.home {
  position: absolute;
  left: 1021px;
  bottom: 17px;
  width: 690px;
  height: 10px;
  border-radius: 5px;
  background: #000;
}
</style>

<style>
html,
body {
  margin: 0;
  background: #fff;
}
</style>
